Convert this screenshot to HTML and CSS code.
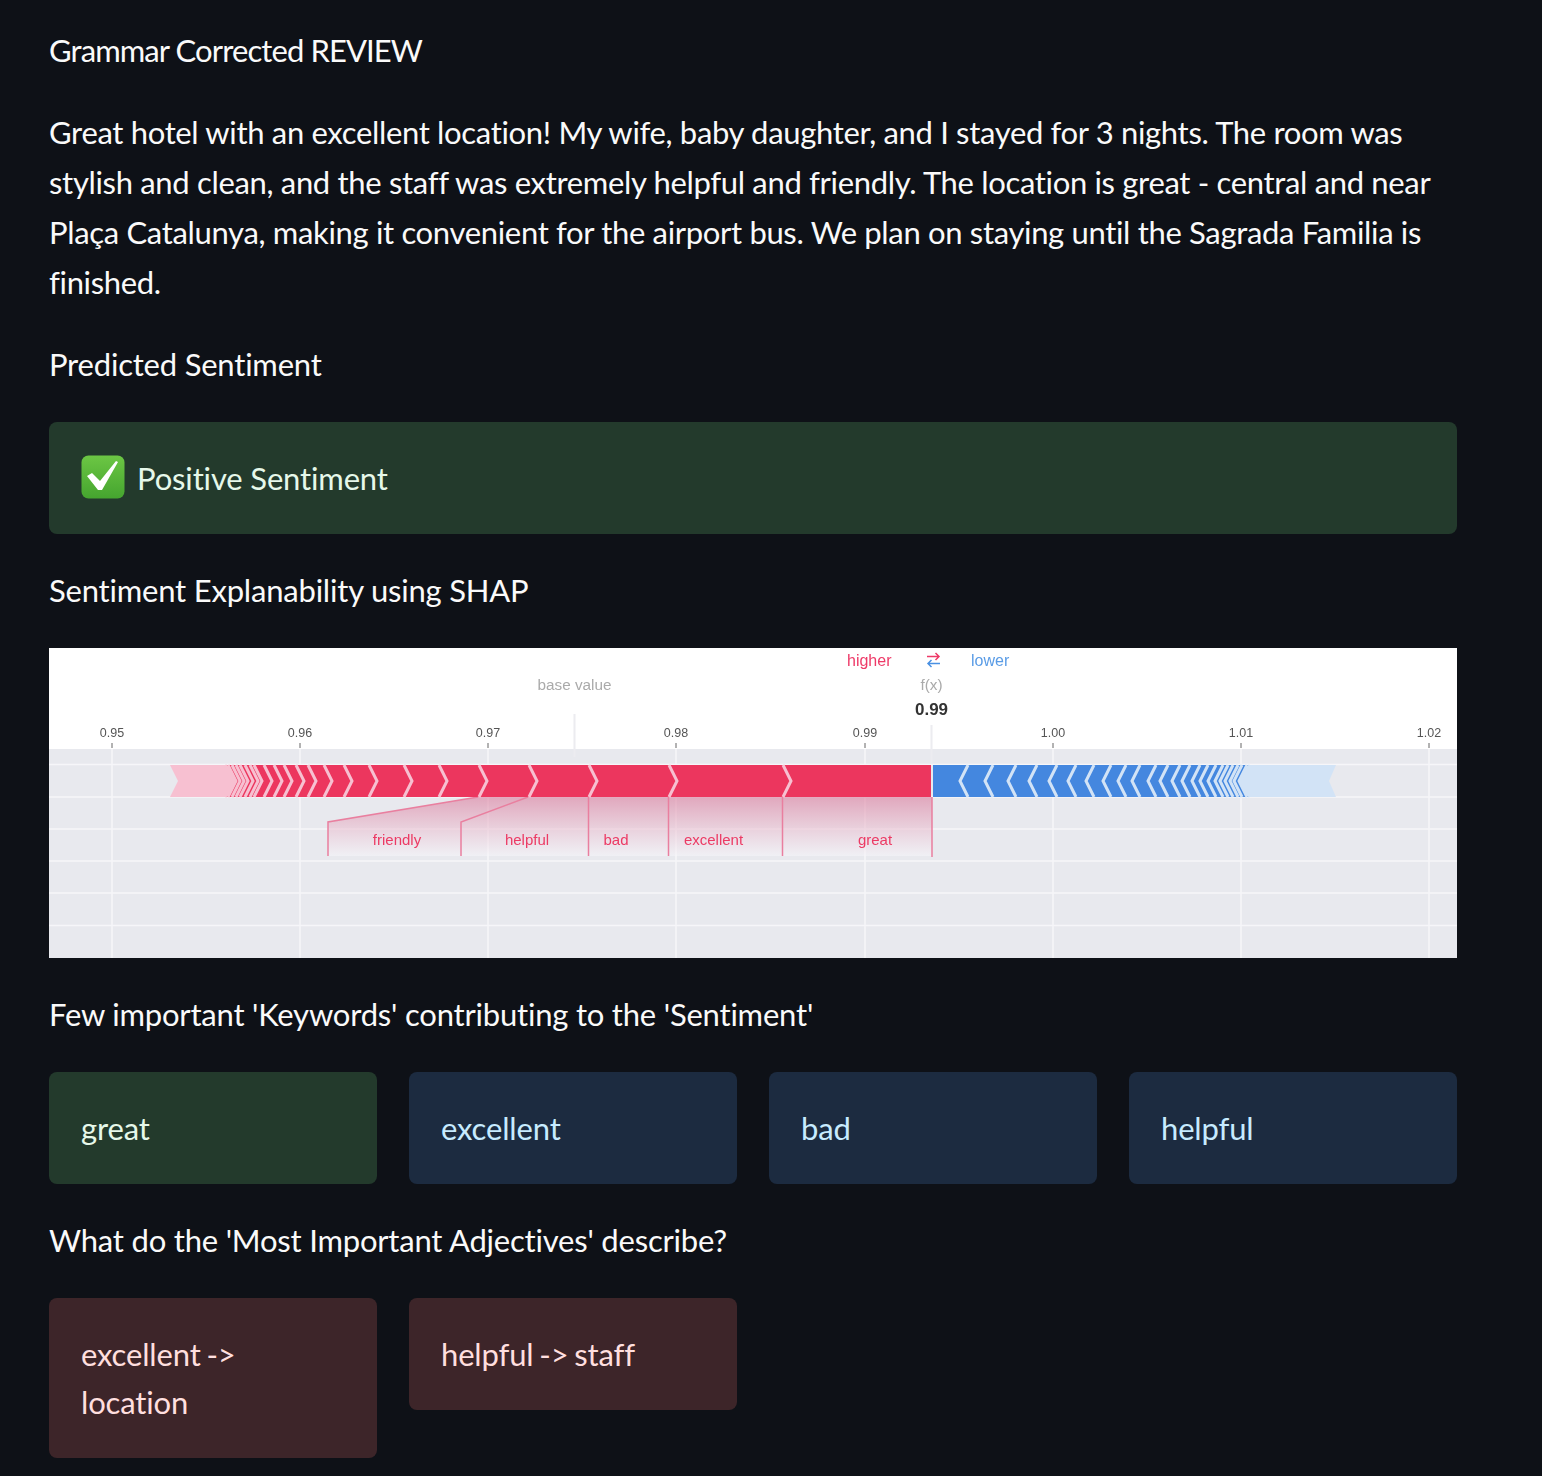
FILE: index.html
```html
<!DOCTYPE html>
<html lang="en">
<head>
<meta charset="utf-8">
<title>Review sentiment</title>
<link rel="stylesheet" href="styles.css">
</head>
<body>
<main class="page">
  <p class="label tight">Grammar Corrected REVIEW</p>
  <p class="review">Great hotel with an excellent location! My wife, baby daughter, and I stayed for 3 nights. The room was stylish and clean, and the staff was extremely helpful and friendly. The location is great - central and near Plaça Catalunya, making it convenient for the airport bus. We plan on staying until the Sagrada Familia is finished.</p>
  <p class="label">Predicted Sentiment</p>
  <div class="box green sentiment">
    <svg class="check" viewBox="0 0 44 44" aria-hidden="true">
      <defs><linearGradient id="ck" x1="0" y1="0" x2="0" y2="1"><stop offset="0" stop-color="#6cc644"/><stop offset="1" stop-color="#45a52f"/></linearGradient></defs>
      <rect x="0.5" y="0.5" width="43" height="43" rx="7" fill="url(#ck)"/>
      <path d="M6 21L11 18L19 26L35 6L37 7L21 35H17Z" fill="#fff"/>
    </svg>
    <span>Positive Sentiment</span>
  </div>
  <p class="label">Sentiment Explanability using SHAP</p>
  <svg class="shap" viewBox="49 648 1408 310" role="img" aria-label="SHAP force plot">
    <defs>
      <linearGradient id="fade" x1="0" y1="0" x2="0" y2="1">
        <stop offset="0" stop-color="#dc7f9f" stop-opacity=".62"/>
        <stop offset="1" stop-color="#f6f6fa" stop-opacity=".55"/>
      </linearGradient>
    </defs>
    <rect class="plot" x="49" y="749" width="1408" height="209"/>
    <path class="grid" d="M49 764.5H1457M49 797H1457M49 829H1457M49 861H1457M49 893H1457M49 925.5H1457M112 749V958M300 749V958M488 749V958M676 749V958M865 749V958M1053 749V958M1241 749V958M1429 749V958"/>
    <path class="tick" d="M112 743V748M300 743V748M488 743V748M676 743V748M865 743V748M1053 743V748M1241 743V748M1429 743V748"/>
    <g class="axis">
      <text x="112" y="737">0.95</text><text x="300" y="737">0.96</text><text x="488" y="737">0.97</text><text x="676" y="737">0.98</text><text x="865" y="737">0.99</text><text x="1053" y="737">1.00</text><text x="1241" y="737">1.01</text><text x="1429" y="737">1.02</text>
    </g>
    <path class="marker" d="M574.5 714V757M931.5 725V764"/>
    <text class="higher" x="847" y="666">higher</text>
    <text class="lower" x="971" y="666">lower</text>
    <path class="arrow-r" d="M927 656.5H939M935.500 653L939 656.500L935.500 660" />
    <path class="arrow-b" d="M940 663.500H928M931.500 660L928 663.500L931.500 667"/>
    <text class="muted" x="574.500" y="690">base value</text>
    <text class="muted" x="931.500" y="690">f(x)</text>
    <text class="fx" x="931.500" y="715">0.99</text>

    <path class="fan" d="M328 822L478 797H932V856H328Z"/>
    <path class="lead" d="M328 856V822L478 797M461 856V822L528 797M588.500 797V856M668.500 797V856M782.500 797V856M932 797V857"/>
    <g class="word">
      <text x="397" y="845">friendly</text><text x="527" y="845">helpful</text><text x="616" y="845">bad</text><text x="713.500" y="845">excellent</text><text x="875" y="845">great</text>
    </g>

    <path class="red-fade" d="M170 765H240V797H170L178 781Z"/>
    <path class="red-bar" d="M226 765H931V797H226L234 781Z"/>
    <path class="red-sep" d="M225 765L233 781L225 797M228 765L236 781L228 797M232 765L240 781L232 797M236 765L244 781L236 797M240 765L248 781L240 797M245 765L253 781L245 797M250 765L258 781L250 797M254 765L262 781L254 797M264 765L272 781L264 797M274 765L282 781L274 797M284 765L292 781L284 797M296 765L304 781L296 797M308 765L316 781L308 797M324 765L332 781L324 797M344 765L352 781L344 797M369 765L377 781L369 797M404 765L412 781L404 797M439 765L447 781L439 797M479 765L487 781L479 797M529 765L537 781L529 797M589 765L597 781L589 797M669 765L677 781L669 797M783 765L791 781L783 797"/>

    <path class="blue-fade" d="M1225 765H1336L1329 781L1336 797H1225Z"/>
    <path class="blue-bar" d="M933 765H1250L1242 781L1250 797H933Z"/>
    <path class="blue-sep" d="M968 765L960 781L968 797M993 765L985 781L993 797M1016 765L1008 781L1016 797M1037 765L1029 781L1037 797M1057 765L1049 781L1057 797M1076 765L1068 781L1076 797M1094 765L1086 781L1094 797M1111 765L1103 781L1111 797M1126 765L1118 781L1126 797M1140 765L1132 781L1140 797M1156 765L1148 781L1156 797M1168 765L1160 781L1168 797M1180 765L1172 781L1180 797M1190 765L1182 781L1190 797M1200 765L1192 781L1200 797M1208 765L1200 781L1208 797M1216 765L1208 781L1216 797M1223 765L1215 781L1223 797M1228 765L1220 781L1228 797M1233 765L1225 781L1233 797M1238 765L1230 781L1238 797M1242 765L1234 781L1242 797M1247 765L1239 781L1247 797M1250 765L1242 781L1250 797"/>
  </svg>
  <p class="label">Few important 'Keywords' contributing to the 'Sentiment'</p>
  <div class="cards">
    <div class="box green">great</div>
    <div class="box blue">excellent</div>
    <div class="box blue">bad</div>
    <div class="box blue">helpful</div>
  </div>
  <p class="label">What do the 'Most Important Adjectives' describe?</p>
  <div class="cards">
    <div class="box red">excellent -&gt; location</div>
    <div class="box red">helpful -&gt; staff</div>
  </div>
</main>
</body>
</html>
```

FILE: styles.css
```css
* { box-sizing: border-box; }
html, body { margin: 0; background: #0e1117; }
.page {
  width: 1542px;
  height: 1476px;
  padding: 26px 85px 0 49px;
  display: flex;
  flex-direction: column;
  gap: 32px;
  overflow: hidden;
  color: #fafafa;
  font-family: Lato, sans-serif;
  font-size: 31px;
}
.label, .review { margin: -1px 0 1px; line-height: 50px; letter-spacing: -0.2px; }
.review { letter-spacing: -0.33px; }
.tight { letter-spacing: -0.9px; }
.box {
  padding: 32px;
  border-radius: 8px;
  line-height: 48px;
  letter-spacing: -0.15px;
}
.green { background: #233a2c; color: #e6f8ea; }
.blue { background: #1c2b40; color: #c7ebff; }
.red { background: #3d2529; color: #ffdfdf; word-spacing: -2px; }
.sentiment { display: flex; align-items: center; gap: 12px; }
.check { width: 44px; height: 44px; flex: none; margin-top: -2px; }
.cards {
  display: grid;
  grid-template-columns: repeat(4, 1fr);
  gap: 32px;
  align-items: start;
}
.shap {
  display: block;
  width: 1408px;
  height: 310px;
  flex: none;
  background: #fff;
  filter: blur(0.45px);
  font-family: "Liberation Sans", Arial, sans-serif;
}
.plot { fill: #e8e9ee; }
.grid { stroke: #f6f6f9; stroke-width: 1.500; fill: none; }
.tick { stroke: #666; stroke-width: 1; fill: none; }
.axis text { font-size: 12.500px; fill: #555; text-anchor: middle; }
.marker { stroke: #ececf0; stroke-width: 2; fill: none; }
.higher { font-size: 16px; fill: #ee3a68; }
.lower { font-size: 16px; fill: #5a9ce6; }
.arrow-r { stroke: #ee3a68; stroke-width: 1.500; fill: none; }
.arrow-b { stroke: #4a90e2; stroke-width: 1.500; fill: none; }
.muted { font-size: 15.300px; fill: #aaa; text-anchor: middle; }
.fx { font-size: 17px; font-weight: 700; fill: #333; text-anchor: middle; }
.fan { fill: url(#fade); }
.lead { stroke: #e97f9f; stroke-width: 1.500; fill: none; }
.word text { font-size: 15px; fill: #ec3a64; text-anchor: middle; }
.red-fade { fill: #f7c0d1; }
.red-bar { fill: #ec365e; }
.red-sep { stroke: #f7c0d1; stroke-width: 3; fill: none; }
.blue-fade { fill: #d2e3f6; }
.blue-bar { fill: #4487df; }
.blue-sep { stroke: #d2e3f6; stroke-width: 3; fill: none; }
```
